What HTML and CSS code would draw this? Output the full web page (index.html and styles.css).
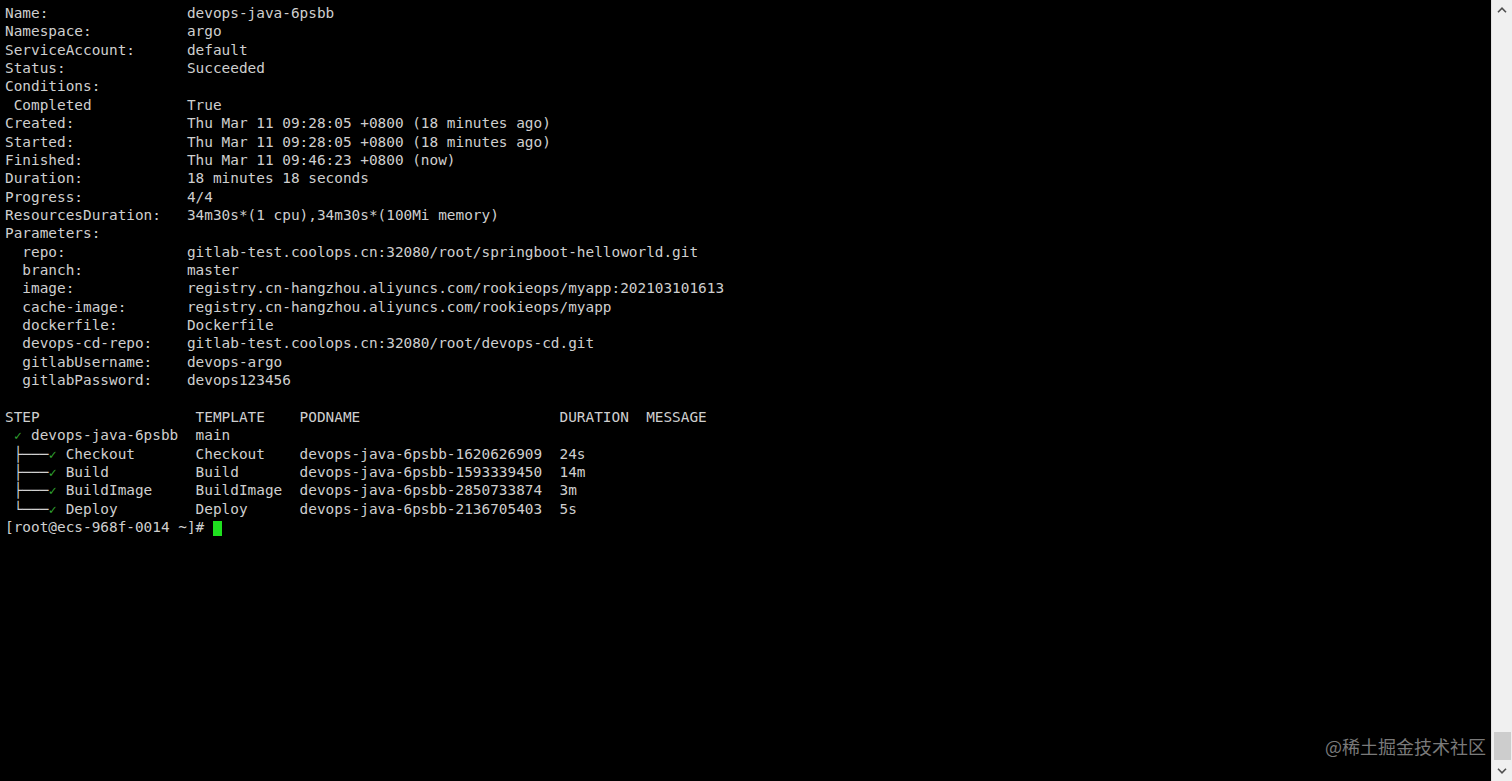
FILE: index.html
```html
<!DOCTYPE html>
<html lang="en">
<head>
<meta charset="utf-8">
<title>argo get devops-java-6psbb</title>
<link rel="stylesheet" href="styles.css">
</head>
<body>
<div class="window">
<main class="terminal">
<pre class="output">Name:                devops-java-6psbb
Namespace:           argo
ServiceAccount:      default
Status:              Succeeded
Conditions:
 Completed           True
Created:             Thu Mar 11 09:28:05 +0800 (18 minutes ago)
Started:             Thu Mar 11 09:28:05 +0800 (18 minutes ago)
Finished:            Thu Mar 11 09:46:23 +0800 (now)
Duration:            18 minutes 18 seconds
Progress:            4/4
ResourcesDuration:   34m30s*(1 cpu),34m30s*(100Mi memory)
Parameters:
  repo:              gitlab-test.coolops.cn:32080/root/springboot-helloworld.git
  branch:            master
  image:             registry.cn-hangzhou.aliyuncs.com/rookieops/myapp:202103101613
  cache-image:       registry.cn-hangzhou.aliyuncs.com/rookieops/myapp
  dockerfile:        Dockerfile
  devops-cd-repo:    gitlab-test.coolops.cn:32080/root/devops-cd.git
  gitlabUsername:    devops-argo
  gitlabPassword:    devops123456

STEP                  TEMPLATE    PODNAME                       DURATION  MESSAGE
 <span class="ok">✓</span> devops-java-6psbb  main
 <span class="tree">├───</span><span class="ok">✓</span> Checkout       Checkout    devops-java-6psbb-1620626909  24s
 <span class="tree">├───</span><span class="ok">✓</span> Build          Build       devops-java-6psbb-1593339450  14m
 <span class="tree">├───</span><span class="ok">✓</span> BuildImage     BuildImage  devops-java-6psbb-2850733874  3m
 <span class="tree">└───</span><span class="ok">✓</span> Deploy         Deploy      devops-java-6psbb-2136705403  5s
[root@ecs-968f-0014 ~]# <span class="cursor"> </span></pre>
<div class="watermark">@稀土掘金技术社区</div>
</main>
<aside class="scrollbar">
<div class="arrow">
<svg width="10" height="6" viewBox="0 0 10 6"><path d="M1 5.2 L5 1.2 L9 5.2" fill="none" stroke="#505050" stroke-width="1.6"/></svg>
</div>
<div class="track"><div class="thumb"></div></div>
<div class="arrow">
<svg width="10" height="6" viewBox="0 0 10 6"><path d="M1 0.8 L5 4.8 L9 0.8" fill="none" stroke="#505050" stroke-width="1.6"/></svg>
</div>
</aside>
</div>
</body>
</html>
```
FILE: styles.css
```css
html, body {
  margin: 0;
  padding: 0;
  height: 100%;
  background: #000;
}
.window {
  display: flex;
  height: 100vh;
  overflow: hidden;
}
.terminal {
  flex: 1;
  position: relative;
  background: #000;
  min-width: 0;
}
.output {
  margin: 0;
  padding: 4px 0 0 5px;
  font-family: "DejaVu Sans Mono", monospace;
  font-size: 14.4px;
  line-height: 18.36px;
  color: #cfcfcf;
  white-space: pre;
}
.ok {
  display: inline-block;
  width: 8.67px;
  height: 10px;
  line-height: 10px;
  overflow: visible;
  text-align: center;
  vertical-align: baseline;
  color: #30a030;
  font-size: 13px;
}
.tree {
  color: #cfcfcf;
}
.cursor {
  display: inline-block;
  width: 9px;
  height: 15px;
  background: #1fe01f;
  vertical-align: -3px;
}
.watermark {
  position: absolute;
  right: 5px;
  bottom: 23px;
  font-family: "Noto Sans CJK SC", "Noto Sans", sans-serif;
  font-size: 18px;
  line-height: 24px;
  color: #7a7a7a;
}
.scrollbar {
  width: 20px;
  flex: none;
  background: #f0f0f0;
  border-left: 1px solid #e2e2e2;
  display: flex;
  flex-direction: column;
}
.arrow {
  height: 20px;
  display: flex;
  align-items: center;
  justify-content: center;
}
.track {
  flex: 1;
  display: flex;
  flex-direction: column;
  justify-content: flex-end;
  align-items: center;
}
.thumb {
  width: 17px;
  height: 28px;
  background: #cdcdcd;
  margin-bottom: 1px;
}
```
